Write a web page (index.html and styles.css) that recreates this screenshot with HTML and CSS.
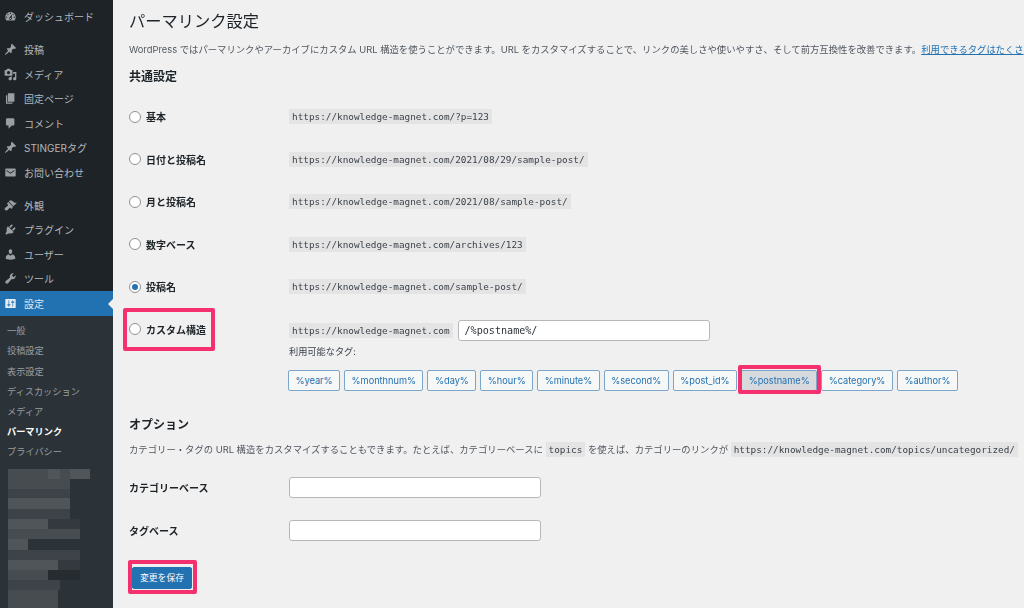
FILE: index.html
```html
<!DOCTYPE html>
<html lang="ja">
<head>
<meta charset="utf-8">
<title>パーマリンク設定</title>
<link rel="stylesheet" href="styles.css">
</head>
<body>
<div class="page">
  <nav class="side">
    <ul class="menu">
      <li class="item"><svg class="ic" viewBox="0 0 20 20"><path d="M3.76 16h12.48c1.1-1.37 1.76-3.11 1.76-5 0-4.42-3.58-8-8-8s-8 3.58-8 8c0 1.89.66 3.63 1.76 5zM10 4c.55 0 1 .45 1 1s-.45 1-1 1-1-.45-1-1 .45-1 1-1zM6 6c.55 0 1 .45 1 1s-.45 1-1 1-1-.45-1-1 .45-1 1-1zm8 0c.55 0 1 .45 1 1s-.45 1-1 1-1-.45-1-1 .45-1 1-1zm-5.37 5.55L12 7v6c0 1.1-.9 2-2 2s-2-.9-2-2c0-.57.24-1.08.63-1.45zM4 10c.55 0 1 .45 1 1s-.45 1-1 1-1-.45-1-1 .45-1 1-1zm12 0c.55 0 1 .45 1 1s-.45 1-1 1-1-.45-1-1 .45-1 1-1zm-5 3c0-.55-.45-1-1-1s-1 .45-1 1 .45 1 1 1 1-.45 1-1z"/></svg>ダッシュボード</li>
      <li class="item sep"><svg class="ic" viewBox="0 0 20 20"><path d="M10.44 3.02l1.82-1.82 6.36 6.35-1.83 1.82c-1.05-.68-2.48-.57-3.41.36l-.75.75c-.92.93-1.04 2.35-.35 3.41l-1.83 1.82-2.41-2.41-2.8 2.79c-.42.42-3.38 2.71-3.8 2.29s1.86-3.39 2.28-3.81l2.79-2.79L4.1 9.36l1.83-1.82c1.05.69 2.48.57 3.4-.36l.75-.75c.93-.92 1.05-2.35.36-3.41z"/></svg>投稿</li>
      <li class="item"><svg class="ic" viewBox="0 0 20 20"><path d="M13 11V4c0-.55-.45-1-1-1h-1.67L9 1H5L3.67 3H2c-.55 0-1 .45-1 1v7c0 .55.45 1 1 1h10c.55 0 1-.45 1-1zM7 4.5c1.38 0 2.5 1.12 2.5 2.5S8.38 9.5 7 9.5 4.5 8.38 4.5 7 5.62 4.5 7 4.5zM14 6h5v10.5c0 1.38-1.12 2.5-2.5 2.5S14 17.88 14 16.5s1.12-2.5 2.5-2.5c.17 0 .34.02.5.05V9h-3V6zm-4 8.05V13h2v3.5c0 1.38-1.12 2.5-2.5 2.5S7 17.88 7 16.5 8.12 14 9.5 14c.17 0 .34.02.5.05z"/></svg>メディア</li>
      <li class="item"><svg class="ic" viewBox="0 0 20 20"><path d="M6 15V2h10v13H6zm-1 1h8v2H3V5h2v11z"/></svg>固定ページ</li>
      <li class="item"><svg class="ic" viewBox="0 0 20 20"><path d="M5 2h9c1.1 0 2 .9 2 2v7c0 1.1-.9 2-2 2h-2l-5 5v-5H5c-1.1 0-2-.9-2-2V4c0-1.1.9-2 2-2z"/></svg>コメント</li>
      <li class="item"><svg class="ic" viewBox="0 0 20 20"><path d="M10.44 3.02l1.82-1.82 6.36 6.35-1.83 1.82c-1.05-.68-2.48-.57-3.41.36l-.75.75c-.92.93-1.04 2.35-.35 3.41l-1.83 1.82-2.41-2.41-2.8 2.79c-.42.42-3.38 2.71-3.8 2.29s1.86-3.39 2.28-3.81l2.79-2.79L4.1 9.36l1.83-1.82c1.05.69 2.48.57 3.4-.36l.75-.75c.93-.92 1.05-2.35.36-3.41z"/></svg>STINGERタグ</li>
      <li class="item"><svg class="ic" viewBox="0 0 20 20"><path d="M3 4h14c.55 0 1 .45 1 1v10c0 .55-.45 1-1 1H3c-.55 0-1-.45-1-1V5c0-.55.45-1 1-1zm1 2.200v1.600l6 4 6-4V6.200l-6 4z"/></svg>お問い合わせ</li>
      <li class="item sep"><svg class="ic" viewBox="0 0 20 20"><path d="M14.48 11.06L7.41 3.99l1.5-1.5c.5-.56 2.3-.47 3.51.32 1.21.8 1.43 1.28 2.91 2.1 1.18.64 2.45 1.26 4.45.85zm-.71.71L6.7 4.7 4.93 6.47c-.39.39-.39 1.02 0 1.41l1.06 1.06c.39.39.39 1.03 0 1.42-.6.6-1.43 1.11-2.21 1.69-.35.26-.7.53-1.01.84C1.43 13.23 1 14.03 1 15c0 .39.07.74.2 1.05.13.33.33.62.59.87.25.25.54.46.87.59.31.13.66.19 1.05.19.97 0 1.77-.43 2.12-.78.31-.31.58-.66.84-1.01.58-.78 1.09-1.61 1.69-2.21.39-.39 1.03-.39 1.42 0l1.06 1.06c.39.39 1.02.39 1.41 0z"/></svg>外観</li>
      <li class="item"><svg class="ic" viewBox="0 0 20 20"><path d="M13.11 4.36L9.87 7.6 8 5.73l3.24-3.24c.35-.34 1.05-.2 1.56.32.52.51.66 1.21.31 1.55zm-8 1.77l.91-1.12 9.01 9.01-1.19.84c-.71.71-2.63 1.16-3.82 1.16H6.14L4.9 17.26c-.59.59-1.54.59-2.12 0-.59-.58-.59-1.53 0-2.12l1.24-1.24v-3.88c0-1.13.4-3.19 1.09-3.89zm7.26 3.97l3.24-3.24c.34-.35 1.04-.21 1.55.31.52.51.66 1.21.31 1.55l-3.24 3.25z"/></svg>プラグイン</li>
      <li class="item"><svg class="ic" viewBox="0 0 20 20"><path d="M10 9.25c-2.27 0-2.73-3.44-2.73-3.44C7 4.02 7.82 2 9.97 2c2.160 0 2.98 2.02 2.71 3.81 0 0-.41 3.44-2.68 3.44zm0 2.57L12.72 10c2.39 0 4.52 2.33 4.52 4.53v2.49s-3.65 1.13-7.24 1.13c-3.65 0-7.24-1.13-7.24-1.13v-2.49c0-2.25 1.94-4.48 4.47-4.48z"/></svg>ユーザー</li>
      <li class="item"><svg class="ic" viewBox="0 0 20 20"><path d="M16.68 9.77c-1.34 1.34-3.3 1.67-4.95.99l-5.41 6.52c-.99.99-2.59.99-3.58 0s-.99-2.59 0-3.57l6.52-5.42c-.68-1.65-.35-3.61.99-4.95 1.28-1.28 3.12-1.62 4.72-1.06l-2.89 2.89 2.82 2.82 2.86-2.87c.53 1.58.18 3.39-1.08 4.65z"/></svg>ツール</li>
      <li class="item active"><svg class="ic" viewBox="0 0 20 20"><path d="M18 16V4c0-.55-.45-1-1-1H3c-.55 0-1 .45-1 1v12c0 .55.45 1 1 1h14c.55 0 1-.45 1-1zM8 11h1c.55 0 1 .45 1 1s-.45 1-1 1H8v1.5c0 .28-.22.5-.5.5s-.5-.22-.5-.5V13H6c-.55 0-1-.45-1-1s.45-1 1-1h1V5.500c0-.28.22-.5.5-.5s.5.22.5.5V11zm5-2h-1c-.55 0-1-.45-1-1s.45-1 1-1h1V5.500c0-.28.22-.5.5-.5s.5.22.5.5V7h1c.55 0 1 .45 1 1s-.45 1-1 1h-1v5.500c0 .28-.22.5-.5.5s-.5-.22-.5-.5V9z"/></svg>設定</li>
    </ul>
    <div class="subwrap">
      <ul class="sub">
        <li>一般</li>
        <li>投稿設定</li>
        <li>表示設定</li>
        <li>ディスカッション</li>
        <li>メディア</li>
        <li class="cur">パーマリンク</li>
        <li>プライバシー</li>
      </ul>
      <svg class="mosaic" viewBox="0 0 113 139" width="113" height="139" aria-hidden="true">
        <rect class="m2" x="8" y="0" width="42" height="10"/><rect class="m1" x="48" y="0" width="12" height="10"/><rect class="m2" x="60" y="0" width="10" height="10"/><rect class="m1" x="70" y="0" width="20" height="10"/>
        <rect class="m2" x="8" y="10" width="62" height="10"/>
        <rect class="m3" x="8" y="20" width="62" height="9"/>
        <rect class="m1" x="8" y="29" width="62" height="11"/>
        <rect class="m3" x="8" y="40" width="62" height="10"/>
        <rect class="m1" x="8" y="50" width="40" height="10"/><rect class="m0" x="48" y="50" width="32" height="10"/>
        <rect class="m2" x="8" y="60" width="72" height="10"/>
        <rect class="m1" x="8" y="70" width="20" height="11"/>
        <rect class="m3" x="8" y="81" width="72" height="10"/>
        <rect class="m1" x="8" y="91" width="50" height="10"/><rect class="m0" x="58" y="91" width="22" height="10"/>
        <rect class="m2" x="8" y="101" width="40" height="10"/><rect class="d" x="48" y="101" width="32" height="10"/>
        <rect class="m3" x="8" y="111" width="52" height="10"/>
        <rect class="m2" x="8" y="121" width="50" height="18"/>
      </svg>
    </div>
  </nav>

  <main class="main">
    <h1 class="title">パーマリンク設定</h1>
    <p class="para">WordPress ではパーマリンクやアーカイブにカスタム URL 構造を使うことができます。URL をカスタマイズすることで、リンクの美しさや使いやすさ、そして前方互換性を改善できます。<a class="link" href="#">利用できるタグはたくさ</a></p>
    <h2 class="section">共通設定</h2>
    <div class="rows">
      <div class="row"><label class="choice"><span class="radio"></span>基本</label><code class="code">https://knowledge-magnet.com/?p=123</code></div>
      <div class="row"><label class="choice"><span class="radio"></span>日付と投稿名</label><code class="code">https://knowledge-magnet.com/2021/08/29/sample-post/</code></div>
      <div class="row"><label class="choice"><span class="radio"></span>月と投稿名</label><code class="code">https://knowledge-magnet.com/2021/08/sample-post/</code></div>
      <div class="row"><label class="choice"><span class="radio"></span>数字ベース</label><code class="code">https://knowledge-magnet.com/archives/123</code></div>
      <div class="row"><label class="choice"><span class="radio on"></span>投稿名</label><code class="code">https://knowledge-magnet.com/sample-post/</code></div>
      <div class="row custom">
        <label class="choice mark-label"><span class="radio"></span>カスタム構造</label>
        <div class="custom-body">
          <div class="custom-line"><code class="code">https://knowledge-magnet.com</code><input class="input wide" type="text" value="/%postname%/"></div>
          <div class="avail">利用可能なタグ:</div>
          <div class="tags">
            <button class="tag" type="button">%year%</button>
            <button class="tag" type="button">%monthnum%</button>
            <button class="tag" type="button">%day%</button>
            <button class="tag" type="button">%hour%</button>
            <button class="tag" type="button">%minute%</button>
            <button class="tag" type="button">%second%</button>
            <button class="tag" type="button">%post_id%</button>
            <button class="tag picked" type="button">%postname%</button>
            <button class="tag" type="button">%category%</button>
            <button class="tag" type="button">%author%</button>
          </div>
        </div>
      </div>
    </div>
    <h2 class="section opt">オプション</h2>
    <p class="para para-opt">カテゴリー・タグの URL 構造をカスタマイズすることもできます。たとえば、カテゴリーベースに <code class="code">topics</code> を使えば、カテゴリーのリンクが <code class="code">https://knowledge-magnet.com/topics/uncategorized/</code></p>
    <div class="field first"><label class="flabel">カテゴリーベース</label><input class="input" type="text"></div>
    <div class="field"><label class="flabel">タグベース</label><input class="input" type="text"></div>
    <button class="save" type="button">変更を保存</button>
  </main>
</div>
</body>
</html>
```
FILE: styles.css
```css
*, *::before, *::after { box-sizing: border-box; }
html, body { margin: 0; height: 100%; overflow: hidden; }
body {
  background: #f0f0f1;
  color: #3c434a;
  font-family: Inter, "Noto Sans CJK JP", sans-serif;
  font-size: 9.3px;
}
ul { list-style: none; margin: 0; padding: 0; }

.page { display: flex; width: 1024px; height: 608px; overflow: hidden; filter: blur(0.4px); }

.side { width: 113px; flex: none; background: #1d2327; padding-top: 4.7px; display: flex; flex-direction: column; }
.item {
  height: 24.6px;
  display: flex;
  align-items: center;
  gap: 7px;
  padding-left: 4px;
  color: #b4b7bb;
  font-size: 10px;
  white-space: nowrap;
  position: relative;
}
.item.sep { margin-top: 8px; }
.ic { width: 13px; height: 13px; flex: none; fill: #9a9fa4; }
.item.active { background: #2271b1; color: #dfe9f2; }
.item.active .ic { fill: #e6eef5; }
.item.active::after {
  content: "";
  position: absolute;
  right: 0;
  top: 7.5px;
  border: 5px solid transparent;
  border-right-color: #f0f0f1;
  border-left-width: 0;
}
.subwrap { flex: 1; background: #2c3338; padding-top: 5.5px; }
.sub li { height: 20.15px; line-height: 20.15px; padding-left: 7px; color: #999ea3; font-size: 9.2px; white-space: nowrap; }
.sub .cur { color: #fff; font-weight: 700; }
.mosaic { display: block; margin-top: 7px; }
.m0 { fill: #33393e; }
.m1 { fill: #50555a; }
.m2 { fill: #474c51; }
.m3 { fill: #3d4348; }
.d { fill: #272c30; }

.main { flex: 1; min-width: 0; padding: 0 0 0 16px; }
.title { margin: 0; padding-top: 10px; height: 41px; font-size: 16.25px; line-height: 22px; font-weight: 400; color: #1d2327; white-space: nowrap; }
.para { margin: 0; height: 18px; line-height: 18px; font-size: 9.36px; white-space: nowrap; color: #50575e; }
.link { color: #2271b1; text-decoration: underline; }
.section { margin: 8px 0 0; height: 20px; line-height: 20px; font-size: 12px; font-weight: 700; color: #1d2327; }
.rows { margin-top: 8.5px; }
.row { height: 42.5px; display: flex; align-items: center; }
.choice {
  width: 160px;
  flex: none;
  display: flex;
  align-items: center;
  gap: 5px;
  font-size: 10px;
  font-weight: 700;
  color: #1d2327;
}
.radio { width: 12px; height: 12px; flex: none; border: 1px solid #8c8f94; border-radius: 50%; background: #fff; display: flex; align-items: center; justify-content: center; }
.radio.on::before { content: ""; width: 6px; height: 6px; border-radius: 50%; background: #2271b1; }
.code {
  font-family: "DejaVu Sans Mono", monospace;
  font-size: 9.35px;
  line-height: 15px;
  padding: 0 3px;
  background: #e4e4e5;
  color: #3c434a;
  display: inline-block;
  white-space: nowrap;
}
.row.custom { height: auto; align-items: flex-start; padding-top: 12px; }
.mark-label { position: relative; height: 18px; }
.mark-label::after {
  content: "";
  position: absolute;
  left: -6px;
  top: -12px;
  width: 92px;
  height: 43px;
  border: 4.5px solid #f4306f;
  border-radius: 2px;
}
.custom-line { display: flex; align-items: center; gap: 5px; height: 21px; }
.input {
  width: 252px;
  height: 21px;
  border: 1px solid #b5b7ba;
  border-radius: 3px;
  background: #fff;
  padding: 0 6px;
  font-family: "DejaVu Sans Mono", monospace;
  font-size: 10.1px;
  color: #2c3338;
  outline: none;
  display: block;
}
.avail { height: 11px; line-height: 11px; margin-top: 5px; font-size: 9.2px; color: #3c434a; }
.tags { display: flex; gap: 4px; margin-top: 12.5px; margin-left: -1px; }
.tag {
  height: 21px;
  padding: 0 6.5px;
  border: 1px solid #7ba6c9;
  border-radius: 2px;
  background: #f6f7f7;
  color: #2271b1;
  font-family: Inter, sans-serif;
  font-size: 9.2px;
  white-space: nowrap;
  position: relative;
}
.tag.picked { background: #d8d9dc; }
.tag.picked::after {
  content: "";
  position: absolute;
  left: -4px;
  top: -6px;
  right: -5px;
  bottom: -4px;
  border: 4.5px solid #f4306f;
  border-radius: 2px;
}
.section.opt { margin-top: 24px; }
.para-opt { margin-top: 5px; height: 20px; line-height: 20px; }
.para-opt .code { line-height: 15px; }
.field { display: flex; align-items: center; height: 43px; }
.field.first { margin-top: 6px; }
.flabel { width: 160px; flex: none; font-size: 10px; font-weight: 700; color: #1d2327; }
.save {
  display: block;
  margin: 15px 0 0 3px;
  width: 60px;
  height: 22px;
  padding: 0;
  border: 1px solid #2271b1;
  border-radius: 2px;
  background: #2271b1;
  color: #fff;
  font-family: Inter, "Noto Sans CJK JP", sans-serif;
  font-size: 8.8px;
  position: relative;
}
.save::after {
  content: "";
  position: absolute;
  left: -5px;
  top: -8px;
  right: -6px;
  bottom: -6px;
  border: 4.5px solid #f4306f;
  border-radius: 2px;
}
```
